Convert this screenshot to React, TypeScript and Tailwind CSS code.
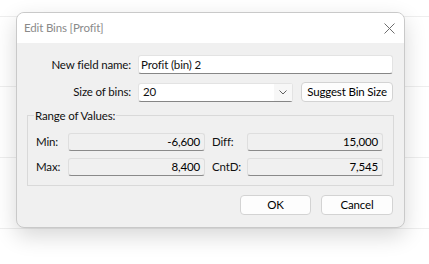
import React from "react";

const font = { fontFamily: 'Lato, "Noto Sans", sans-serif' };

function ReadField({ value }: { value: string }) {
  return (
    <div className="h-[18px] bg-[#f0f0f0] border border-[#dedede] border-b-[#8a8a8a] rounded-[3px] flex items-center justify-end pr-[4px] leading-none text-black">
      {value}
    </div>
  );
}

function Btn({ children, className }: { children: React.ReactNode; className: string }) {
  return (
    <button className={`h-[20px] bg-[#fdfdfd] border border-[#d3d3d3] rounded-[4px] leading-none text-black whitespace-nowrap flex items-center justify-center ${className}`}>
      {children}
    </button>
  );
}

export default function App() {
  return (
    <div className="relative w-[429px] h-[264px] bg-white overflow-hidden text-[11.5px] tracking-[-0.15px] text-[#111]" style={font}>
      {/* background app grid lines */}
      <div className="flex flex-col">
        <div className="h-[17px] border-b border-[#eeeeee]" />
        <div className="h-[70px] border-b border-[#eeeeee]" />
        <div className="h-[71px] border-b border-[#eeeeee]" />
        <div className="h-[71px] border-b border-[#eeeeee]" />
      </div>

      {/* dialog window */}
      <div className="absolute left-[16px] top-[12px] w-[389px] h-[216px] rounded-[8px] border border-[#c9c9c9] bg-[#f0f0f0] overflow-hidden shadow-[0_8px_22px_rgba(0,0,0,0.16)] flex flex-col">
        <div className="h-[30px] bg-white flex items-center justify-between pl-[7px] pr-[9px]">
          <span className="text-[#8a8a8a]">Edit Bins [Profit]</span>
          <svg width="11" height="11" viewBox="0 0 11 11">
            <path d="M0.5 0.5 L10.5 10.5 M10.5 0.5 L0.5 10.5" stroke="#6e6e6e" strokeWidth="1" fill="none" />
          </svg>
        </div>

        <div className="flex flex-col pt-[12px]">
          <div className="flex items-center">
            <div className="w-[114px] text-right whitespace-nowrap">New field name:</div>
            <div className="ml-[7px] w-[255px] h-[19px] bg-white border border-[#e3e3e3] border-b-[#868686] rounded-[3px] flex items-center pl-[2px]">
              Profit (bin) 2
            </div>
          </div>

          <div className="flex items-center mt-[8px]">
            <div className="w-[114px] text-right whitespace-nowrap">Size of bins:</div>
            <div className="ml-[7px] w-[155px] h-[19px] bg-white border border-[#e3e3e3] border-b-[#868686] rounded-[3px] flex items-center">
              <span className="flex-1 pl-[4px]">20</span>
              <span className="w-[18px] h-full bg-[#f7f7f7] flex items-center justify-center">
                <svg width="8" height="5" viewBox="0 0 8 5">
                  <path d="M0.5 0.5 L4 4 L7.5 0.5" stroke="#606060" strokeWidth="1" fill="none" />
                </svg>
              </span>
            </div>
            <Btn className="ml-[8px] w-[92px] h-[20px]">Suggest Bin Size</Btn>
          </div>

          <div className="relative ml-[10px] mt-[13px] w-[367px] h-[71px] border border-[#d9d9d9] pt-[17px] pl-[8px]">
            <span className="absolute left-[6px] -top-[8px] bg-[#f0f0f0] px-[1px] leading-[16px] whitespace-nowrap">
              Range of Values:
            </span>
            <div className="flex items-center">
              <div className="w-[32px]">Min:</div>
              <div className="w-[137px]"><ReadField value="-6,600" /></div>
              <div className="ml-[7px] w-[35px]">Diff:</div>
              <div className="w-[136px]"><ReadField value="15,000" /></div>
            </div>
            <div className="flex items-center mt-[7px]">
              <div className="w-[32px]">Max:</div>
              <div className="w-[137px]"><ReadField value="8,400" /></div>
              <div className="ml-[7px] w-[35px]">CntD:</div>
              <div className="w-[136px]"><ReadField value="7,545" /></div>
            </div>
          </div>

          <div className="flex justify-end gap-[10px] pr-[11px] mt-[9px]">
            <Btn className="w-[71px]">OK</Btn>
            <Btn className="w-[72px]">Cancel</Btn>
          </div>
        </div>
      </div>
    </div>
  );
}
